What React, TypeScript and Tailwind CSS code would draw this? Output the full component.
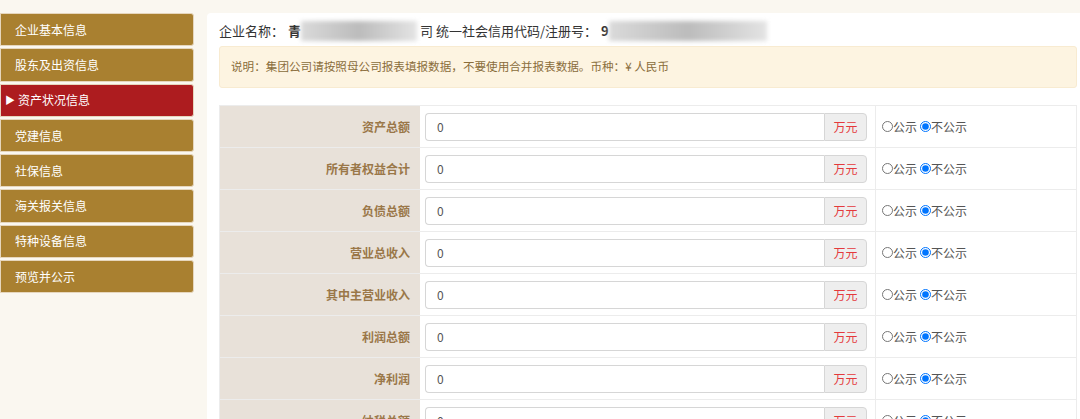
import React from 'react';

const navItems = ['企业基本信息', '股东及出资信息', '资产状况信息', '党建信息', '社保信息', '海关报关信息', '特种设备信息', '预览并公示'];

const rows = ['资产总额', '所有者权益合计', '负债总额', '营业总收入', '其中主营业收入', '利润总额', '净利润', '纳税总额'];

const font = { fontFamily: '"Microsoft YaHei", "Noto Sans CJK SC", sans-serif' };

function Blur({ w }: { w: number }) {
  return (
    <span
      className="inline-block h-[20px] align-middle bg-gradient-to-r from-[#dadada] via-[#bcbcbc] to-[#e4e4e4] blur-[2px]"
      style={{ width: w }}
    />
  );
}

export default function App() {
  const [selected, setSelected] = React.useState<Record<number, 'yes' | 'no'>>({});

  return (
    <div className="flex w-[1080px] h-[419px] overflow-hidden bg-[#faf7f0] pt-[13px]" style={font}>
      {/* Sidebar */}
      <div className="w-[194px] shrink-0 flex flex-col gap-[2px]">
        {navItems.map((item, i) => (
          <div
            key={item}
            className={`h-[33.3px] flex items-center text-[12px] text-white rounded-r-[3px] border border-[#e6d6bd] ${
              i === 2 ? 'bg-[#ad1c1f] pl-[4px]' : 'bg-[#a98030] pl-[14px]'
            }`}
          >
            {i === 2 && <span className="text-[10px] mr-[3px] leading-none">▶</span>}
            {item}
          </div>
        ))}
      </div>

      {/* Main panel */}
      <div className="ml-[13px] flex-1 bg-white rounded-tl-[4px] pl-[12px] pr-[3px]">
        <div className="h-[33px] flex items-center text-[13px] text-[#333] pt-[2px]">
          <span>企业名称：</span>
          <span className="font-bold ml-[4px]">青</span>
          <Blur w={116} />
          <span className="ml-[3px]">司 统一社会信用代码/注册号：</span>
          <span className="font-bold ml-[4px]">9</span>
          <Blur w={158} />
        </div>

        <div className="h-[42px] flex items-center px-[11px] bg-[#fdf4e1] border border-[#f8ebd1] rounded-[3px] text-[11.6px] text-[#8a6d3b]">
          说明：集团公司请按照母公司报表填报数据，不要使用合并报表数据。币种：¥ 人民币
        </div>

        <div className="mt-[17px] border border-[#ececec]">
          {rows.map((label, i) => {
            const val = selected[i] ?? 'no';
            return (
              <div key={label} className="flex h-[42px] border-b border-[#ececec]">
                <div className="w-[200px] shrink-0 bg-[#e8e1d9] flex items-center justify-end pr-[10px] text-[12px] font-bold text-[#9a7748]">
                  {label}
                </div>
                <div className="w-[456px] shrink-0 flex items-center pl-[5px] pr-[8px] border-r border-[#ececec]">
                  <div className="flex flex-1 h-[28px]">
                    <input
                      defaultValue="0"
                      className="flex-1 min-w-0 h-full border border-[#d6d6d6] border-r-0 rounded-l-[4px] px-[11px] text-[12px] text-[#555] outline-none"
                    />
                    <div className="w-[43px] h-full bg-[#eeeeee] border border-[#d6d6d6] rounded-r-[4px] flex items-center justify-center text-[12px] text-[#e4393c]">
                      万元
                    </div>
                  </div>
                </div>
                <div className="flex-1 flex items-center pl-[6px] text-[12px] text-[#555]">
                  <label className="flex items-center">
                    <input
                      type="radio"
                      name={`pub-${i}`}
                      checked={val === 'yes'}
                      onChange={() => setSelected({ ...selected, [i]: 'yes' })}
                      className="w-[11px] h-[11px] m-0"
                    />
                    公示
                  </label>
                  <label className="flex items-center ml-[3px]">
                    <input
                      type="radio"
                      name={`pub-${i}`}
                      checked={val === 'no'}
                      onChange={() => setSelected({ ...selected, [i]: 'no' })}
                      className="w-[11px] h-[11px] m-0"
                    />
                    不公示
                  </label>
                </div>
              </div>
            );
          })}
        </div>
      </div>
    </div>
  );
}
